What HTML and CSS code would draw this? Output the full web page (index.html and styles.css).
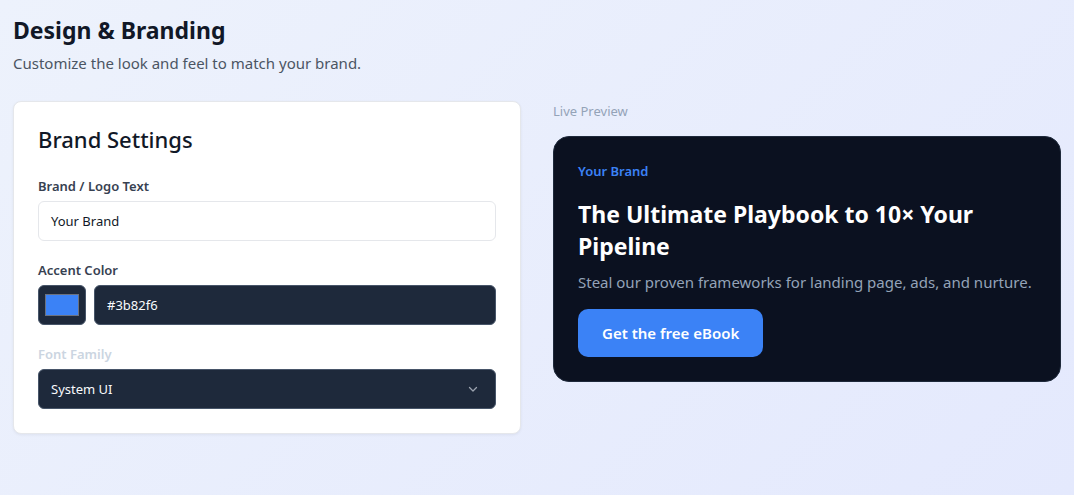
FILE: index.html
```html
<!DOCTYPE html>
<html lang="en">
<head>
<meta charset="utf-8">
<title>Design &amp; Branding</title>
<link rel="stylesheet" href="styles.css">
</head>
<body>
<main class="page">
  <header class="page-head">
    <h1 class="page-title">Design &amp; Branding</h1>
    <p class="page-sub">Customize the look and feel to match your brand.</p>
  </header>
  <div class="columns">
    <section class="card">
      <h2 class="card-title">Brand Settings</h2>
      <div class="field">
        <label class="label">Brand / Logo Text</label>
        <div class="input">Your Brand</div>
      </div>
      <div class="field">
        <label class="label">Accent Color</label>
        <div class="color-row">
          <div class="swatch"><span class="swatch-fill"></span></div>
          <div class="input input-dark grow">#3b82f6</div>
        </div>
      </div>
      <div class="field">
        <label class="label label-muted">Font Family</label>
        <div class="input input-dark select">
          <span>System UI</span>
          <svg class="chev" width="12" height="12" viewBox="0 0 12 12"><path d="M2.5 4.5 6 8l3.5-3.5" fill="none" stroke="#9ca3af" stroke-width="1.3" stroke-linecap="round" stroke-linejoin="round"/></svg>
        </div>
      </div>
    </section>
    <section class="preview-col">
      <div class="preview-label">Live Preview</div>
      <div class="preview">
        <div class="p-brand">Your Brand</div>
        <h3 class="p-title">The Ultimate Playbook to 10× Your Pipeline</h3>
        <p class="p-sub">Steal our proven frameworks for landing page, ads, and nurture.</p>
        <button class="p-btn">Get the free eBook</button>
      </div>
    </section>
  </div>
</main>
</body>
</html>
```
FILE: styles.css
```css
* { box-sizing: border-box; }
html, body { margin: 0; height: 100%; }
body {
  font-family: "Noto Sans", "Open Sans", sans-serif;
  background: linear-gradient(135deg, #edf2fc 0%, #e4e9fd 100%);
  color: #111827;
}
.page { padding: 14px 13px; }
.page-head { margin-bottom: 27px; }
.page-title {
  margin: 0;
  font-size: 23px;
  font-weight: 700;
  line-height: 32px;
  color: #111827;
}
.page-sub {
  margin: 6px 0 0;
  font-size: 15px;
  line-height: 22px;
  color: #4b5563;
}
.columns {
  display: grid;
  grid-template-columns: 1fr 1fr;
  gap: 32px;
  align-items: start;
}
.card {
  background: #fff;
  border: 1px solid #e5e7eb;
  border-radius: 8px;
  box-shadow: 0 1px 3px rgba(15, 23, 42, 0.06);
  padding: 21px 24px 24px;
}
.card-title {
  margin: 0 0 21px;
  font-size: 22px;
  font-weight: 500;
  line-height: 32px;
  color: #111827;
}
.field { display: flex; flex-direction: column; gap: 5px; margin-bottom: 19px; }
.field:last-child { margin-bottom: 0; }
.label {
  font-size: 13px;
  font-weight: 600;
  line-height: 20px;
  color: #374151;
}
.label-muted { color: #cbd5e1; }
.input {
  height: 40px;
  border: 1px solid #e5e7eb;
  border-radius: 6px;
  padding: 0 12px;
  display: flex;
  align-items: center;
  font-size: 13px;
  color: #111827;
  background: #fff;
}
.input-dark {
  background: #1e293b;
  border-color: #475569;
  color: #f8fafc;
}
.grow { flex: 1; }
.color-row { display: flex; gap: 8px; }
.swatch {
  width: 48px;
  height: 40px;
  border-radius: 6px;
  background: #1e293b;
  border: 1px solid #475569;
  display: flex;
  align-items: center;
  justify-content: center;
}
.swatch-fill {
  width: 34px;
  height: 22px;
  background: #3b82f6;
  border: 1px solid #6b7280;
}
.select { justify-content: space-between; }
.chev { margin-right: 4px; }
.preview-col { display: flex; flex-direction: column; }
.preview-label {
  font-size: 13px;
  line-height: 20px;
  color: #94a3b8;
  margin-bottom: 15px;
}
.preview {
  background: #0b1120;
  border: 1px solid #1e293b;
  border-radius: 16px;
  padding: 24px;
  color: #fff;
}
.p-brand {
  font-size: 13px;
  font-weight: 600;
  line-height: 20px;
  color: #3b82f6;
  margin-bottom: 17px;
}
.p-title {
  margin: 0 0 8px;
  font-size: 23px;
  font-weight: 700;
  line-height: 32px;
  color: #fff;
}
.p-sub {
  margin: 0 0 15px;
  font-size: 15px;
  line-height: 24px;
  color: #94a3b8;
}
.p-btn {
  font-family: inherit;
  background: #3b82f6;
  color: #fff;
  border: none;
  border-radius: 10px;
  height: 48px;
  padding: 0 24px;
  font-size: 15px;
  font-weight: 600;
}
```
